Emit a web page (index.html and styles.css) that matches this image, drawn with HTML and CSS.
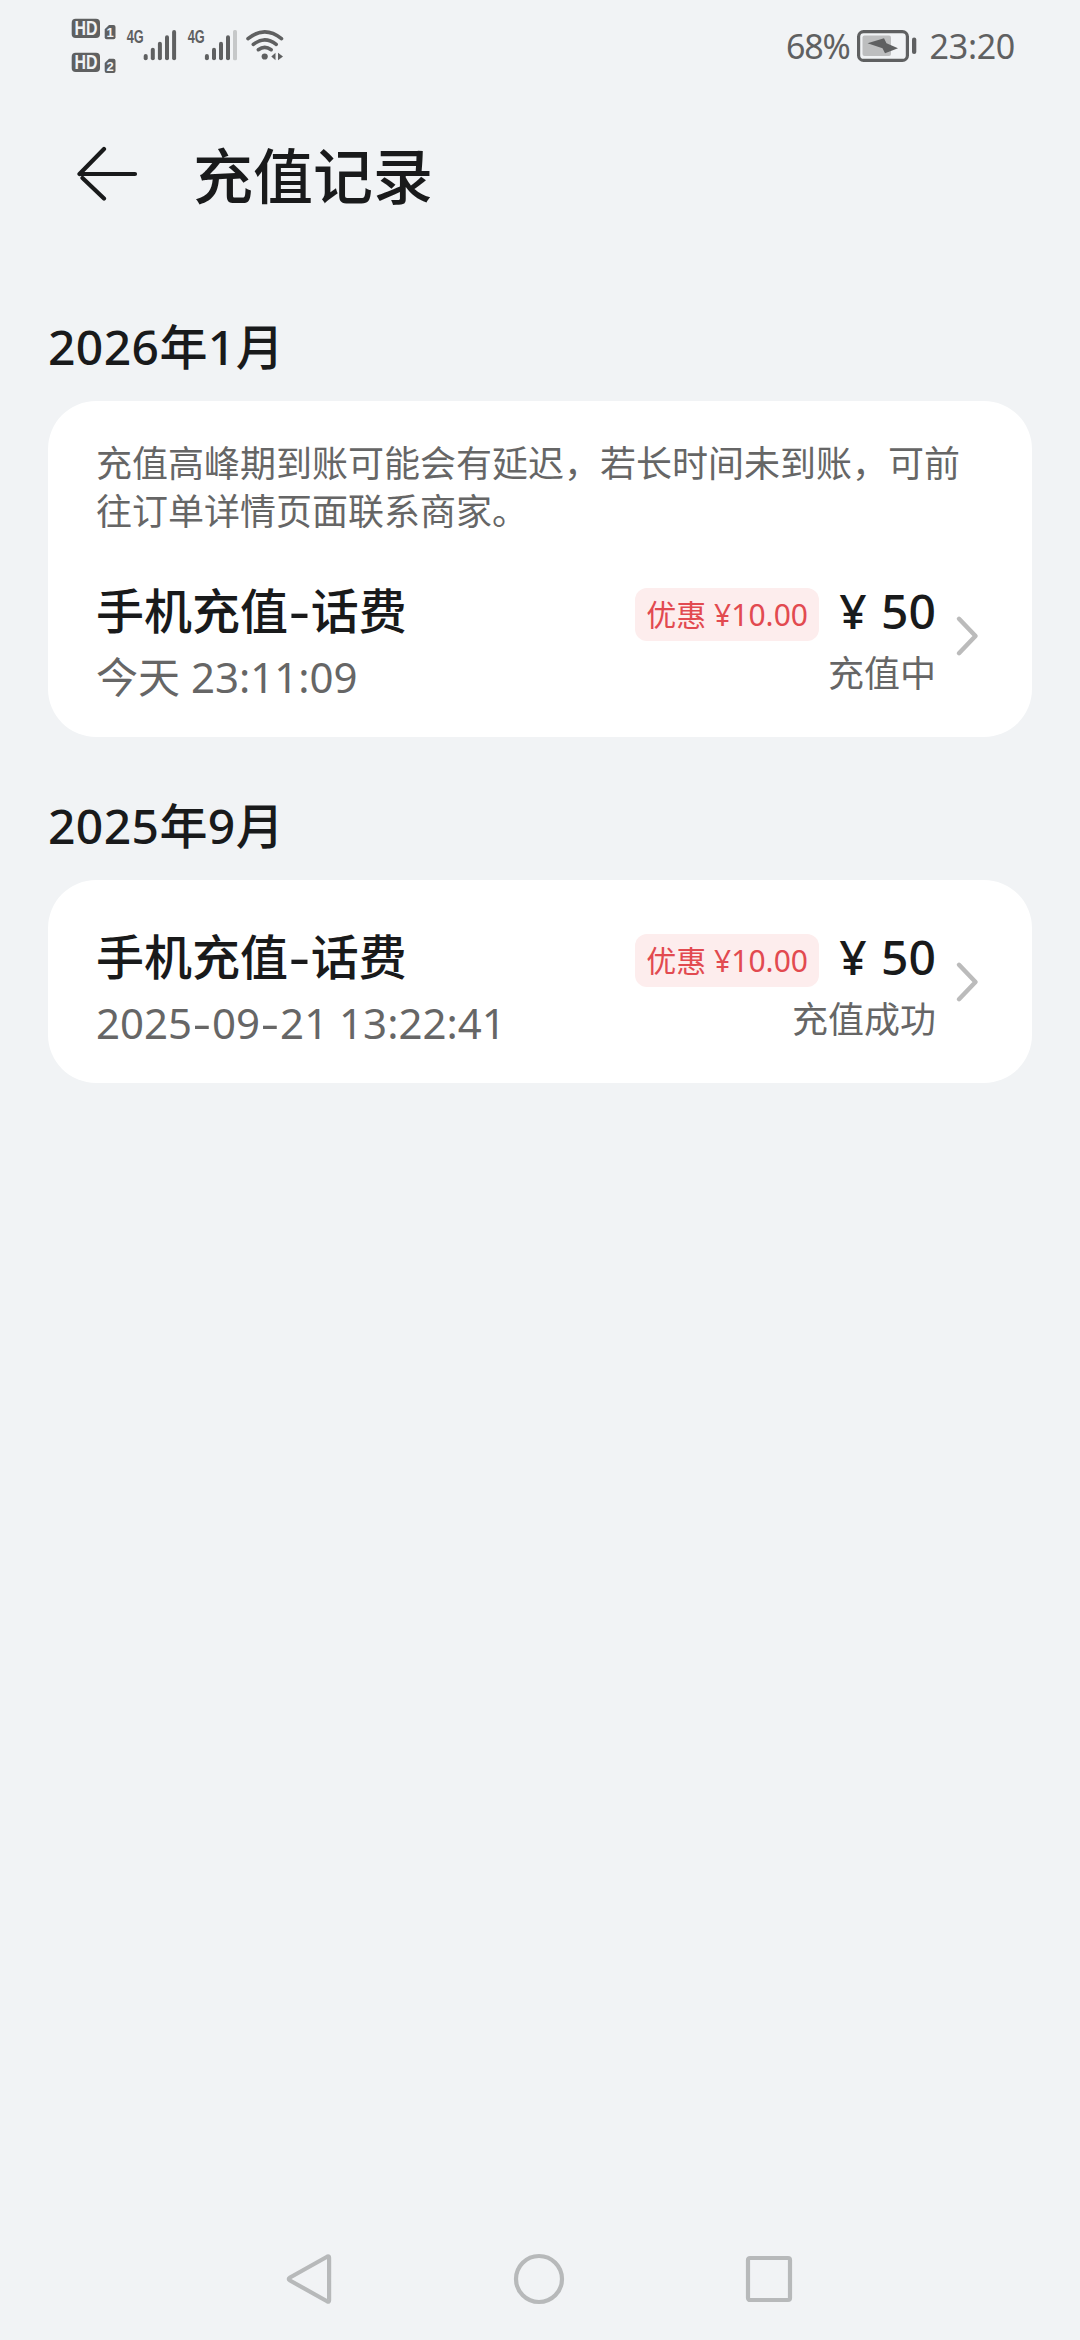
FILE: index.html
```html
<!DOCTYPE html>
<html lang="zh-CN">
<head>
<meta charset="utf-8">
<title>充值记录</title>
<link rel="stylesheet" href="styles.css">
</head>
<body>
<div class="screen">
  <div class="status-bar">
    <svg class="status-icons" width="184" height="90" viewBox="60 0 184 90">
      <g class="ink">
        <rect x="71.7" y="18.8" width="28.3" height="19.2" rx="4"/>
        <path d="M109 25h4.500a2 2 0 0 1 2 2v10.300a2 2 0 0 1-2 2h-6.800a2 2 0 0 1-2-2v-8z"/>
        <rect x="71.700" y="52.800" width="28.300" height="19.200" rx="4"/>
        <path d="M109 58.800h4.500a2 2 0 0 1 2 2v10.200a2 2 0 0 1-2 2h-6.800a2 2 0 0 1-2-2v-8z"/>
        <rect x="143.700" y="54" width="4" height="6.300" rx="2"/>
        <rect x="150.800" y="47.700" width="4" height="12.600" rx="2"/>
        <rect x="157.900" y="41.700" width="4" height="18.600" rx="2"/>
        <rect x="165" y="35.300" width="4" height="25" rx="2"/>
        <rect x="172.100" y="30" width="4" height="30.300" rx="2"/>
        <rect x="204.900" y="54" width="4" height="6.300" rx="2"/>
        <rect x="212" y="47.700" width="4" height="12.600" rx="2"/>
        <rect x="219" y="41.700" width="4" height="18.600" rx="2"/>
        <rect x="226" y="35.300" width="4" height="25" rx="2"/>
      </g>
      <rect class="bar-off" x="233" y="30" width="4" height="30.300" rx="1.500"/>
      <text class="badge-hd" x="74.500" y="35.300" textLength="23" lengthAdjust="spacingAndGlyphs">HD</text>
      <text class="badge-hd" x="74.500" y="69.300" textLength="23" lengthAdjust="spacingAndGlyphs">HD</text>
      <text class="badge-sim" x="110" y="37.100">1</text>
      <text class="badge-sim" x="110" y="71">2</text>
      <text class="net" x="126.700" y="43.300" textLength="17" lengthAdjust="spacingAndGlyphs">4G</text>
      <text class="net" x="187.700" y="43.300" textLength="17" lengthAdjust="spacingAndGlyphs">4G</text>
    </svg>
    <svg class="wifi" width="40" height="90" viewBox="244 0 40 90">
      <g class="wifi-arcs">
        <path d="M248 38.700Q264.700 25 281.500 38.700"/>
        <path d="M253.300 44.400Q264.700 35.200 276.200 44.400"/>
        <path d="M258.300 49.700Q264.700 45 271.200 49.700"/>
      </g>
      <circle class="ink" cx="264.700" cy="56.500" r="3.100"/>
      <path class="ink" d="M271.300 56.500l4.200-3.700v7.400zM283 56.500l-5-3.700v7.400z"/>
    </svg>
    <div class="status-right">
      <span class="percent">68%</span>
      <svg class="battery" width="60" height="32" viewBox="0 0 60 32">
        <rect class="battery-case" x="1.600" y="1.600" width="48.800" height="28.800" rx="5"/>
        <rect class="battery-level" x="5.500" y="5.500" width="28.500" height="20.500" rx="2"/>
        <path class="ink" d="M10.500 13.200 27 8.200 29.500 13.200 41 18.200 28 23.200 25.500 18.200z"/>
        <rect class="ink" x="55" y="7.500" width="4.300" height="16.500" rx="2.100"/>
      </svg>
      <span class="clock">23:20</span>
    </div>
  </div>

  <header class="title-bar">
    <svg class="back" width="62" height="60" viewBox="0 0 62 60">
      <path d="M2.500 30H58M27 5 2.500 30M5.500 34 27 54.500"/>
    </svg>
    <h1 class="title">充值记录</h1>
  </header>

  <main class="records">
    <h2 class="month">2026年1月</h2>
    <section class="card">
      <p class="notice">充值高峰期到账可能会有延迟，若长时间未到账，可前往订单详情页面联系商家。</p>
      <div class="record">
        <div class="info">
          <div class="name">手机充值<span class="dash">-</span>话费</div>
          <div class="time">今天 23:11:09</div>
        </div>
        <div class="amount">
          <div class="price-row"><span class="discount">优惠 ¥10.00</span><span class="price">¥ 50</span></div>
          <div class="state">充值中</div>
        </div>
        <svg class="chevron" width="24" height="42" viewBox="0 0 24 42"><path d="M4 3.800 20.500 21 4 38.200"/></svg>
      </div>
    </section>

    <h2 class="month">2025年9月</h2>
    <section class="card">
      <div class="record">
        <div class="info">
          <div class="name">手机充值<span class="dash">-</span>话费</div>
          <div class="time">2025<span class="dash">-</span>09<span class="dash">-</span>21 13:22:41</div>
        </div>
        <div class="amount">
          <div class="price-row"><span class="discount">优惠 ¥10.00</span><span class="price">¥ 50</span></div>
          <div class="state">充值成功</div>
        </div>
        <svg class="chevron" width="24" height="42" viewBox="0 0 24 42"><path d="M4 3.800 20.500 21 4 38.200"/></svg>
      </div>
    </section>
  </main>

  <nav class="nav-bar">
    <svg width="50" height="52" viewBox="0 0 50 52"><path d="M43.500 3.500 6 24.500q-2.500 1.500 0 3L43.500 48.500q1.600.8 1.600-1.200V4.700q0-2-1.600-1.200z"/></svg>
    <svg width="52" height="52" viewBox="0 0 52 52"><circle cx="26" cy="26" r="23"/></svg>
    <svg width="50" height="52" viewBox="0 0 50 52"><rect x="4" y="5" width="42" height="42" rx="2"/></svg>
  </nav>
</div>
</body>
</html>
```

FILE: styles.css
```css
* { box-sizing: border-box; }

body {
  margin: 0;
  background: #f1f3f5;
  color: #191a1b;
  font-family: "Noto Sans", "Noto Sans CJK SC", sans-serif;
}

h1, h2, p { margin: 0; }
svg { display: block; flex: none; }

.screen {
  width: 1080px;
  height: 2340px;
  display: flex;
  flex-direction: column;
}

/* Status bar */
.status-bar {
  height: 93px;
  padding: 0 65px 0 60px;
  display: flex;
  align-items: flex-start;
}
.ink { fill: #5f6061; }
.bar-off { fill: #c6c8c9; }
.badge-hd { font: bold 20px "Liberation Sans", sans-serif; fill: #f1f3f5; }
.badge-sim { font: bold 13px "Liberation Sans", sans-serif; fill: #f1f3f5; text-anchor: middle; }
.net { font: bold 18.5px "Liberation Sans", sans-serif; fill: #5f6061; }
.wifi-arcs { fill: none; stroke: #5f6061; stroke-width: 3.6; stroke-linecap: round; }
.status-right {
  height: 91px;
  margin-left: auto;
  display: flex;
  align-items: center;
  color: #5f6061;
  font-size: 34px;
}
.percent { letter-spacing: -1.2px; }
.clock { letter-spacing: -0.3px; }
.battery { margin: 0 13px 0 7px; }
.battery-case { fill: none; stroke: #5f6061; stroke-width: 3.2; }
.battery-level { fill: #bdbebf; }

/* Title bar */
.title-bar {
  height: 165px;
  padding: 0 77px;
  display: flex;
  align-items: flex-start;
  gap: 54px;
}
.back { margin-top: 51px; fill: none; stroke: #191a1b; stroke-width: 4.2; stroke-linecap: round; stroke-linejoin: round; }
.title { margin-top: 38px; font-size: 60px; line-height: 90px; font-weight: 500; }

/* Records */
.records { flex: 1; padding: 0 48px; }
.month {
  height: 143px;
  padding-top: 56px;
  font-size: 48px;
  line-height: 66px;
  font-weight: 500;
  letter-spacing: 0.4px;
}
.card {
  padding: 36px 48px;
  border-radius: 48px;
  background: #fff;
}
.notice {
  padding-top: 3px;
  margin-bottom: 34px;
  color: #666;
  font-size: 36px;
  line-height: 48px;
}
.record { height: 131px; display: flex; align-items: center; }
.info { flex: 1; height: 131px; padding-top: 8px; }
.name { font-size: 48px; line-height: 66px; font-weight: 500; }
.dash { display: inline-block; transform: scaleX(1.35); padding: 0 0.077em; }
.time { margin-top: 5px; color: #666; font-size: 42px; line-height: 56px; white-space: pre; }
.amount { height: 131px; padding-top: 8px; text-align: right; }
.price-row { height: 66px; display: flex; align-items: center; justify-content: flex-end; gap: 20px; }
.discount {
  width: 184px;
  height: 53px;
  margin-top: 7px;
  border-radius: 12px;
  background: #fdeded;
  color: #e24a50;
  font-size: 30px;
  line-height: 54px;
  text-align: center;
  white-space: nowrap;
}
.price { font-size: 48px; line-height: 66px; font-weight: 500; word-spacing: 2px; }
.state { margin-top: 3px; color: #666; font-size: 36px; line-height: 54px; }
.chevron { margin: 0 5px 0 19px; fill: none; stroke: #bbb; stroke-width: 4.5; stroke-linecap: round; stroke-linejoin: round; }

/* System navigation */
.nav-bar {
  height: 122px;
  padding: 0 286px 0 284px;
  display: flex;
  align-items: center;
  justify-content: space-between;
}
.nav-bar svg { fill: none; stroke: #b7b9ba; stroke-width: 4.2; stroke-linejoin: round; }
```
